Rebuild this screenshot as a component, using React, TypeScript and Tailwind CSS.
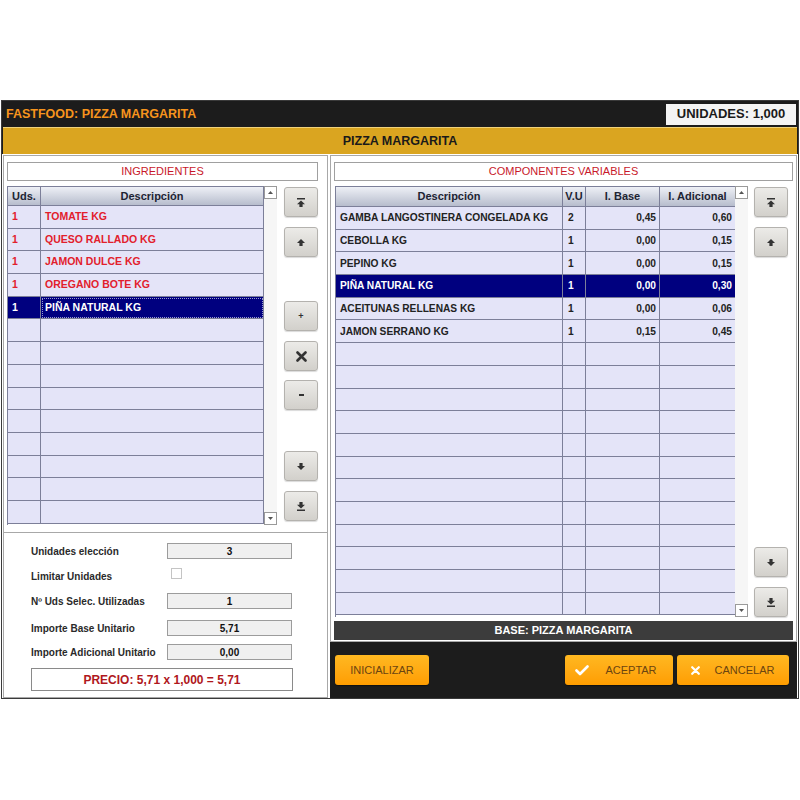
import React from 'react';

type IconName = 'top' | 'up' | 'plus' | 'x' | 'minus' | 'down' | 'bottom';

interface Ingredient {
  uds: string;
  desc: string;
}

interface Componente {
  desc: string;
  vu: string;
  base: string;
  adicional: string;
}

const ingredientes: Ingredient[] = [
  { uds: '1', desc: 'TOMATE KG' },
  { uds: '1', desc: 'QUESO RALLADO KG' },
  { uds: '1', desc: 'JAMON DULCE KG' },
  { uds: '1', desc: 'OREGANO BOTE KG' },
  { uds: '1', desc: 'PIÑA NATURAL KG' },
];

const componentes: Componente[] = [
  { desc: 'GAMBA LANGOSTINERA CONGELADA KG', vu: '2', base: '0,45', adicional: '0,60' },
  { desc: 'CEBOLLA KG', vu: '1', base: '0,00', adicional: '0,15' },
  { desc: 'PEPINO KG', vu: '1', base: '0,00', adicional: '0,15' },
  { desc: 'PIÑA NATURAL KG', vu: '1', base: '0,00', adicional: '0,30' },
  { desc: 'ACEITUNAS RELLENAS KG', vu: '1', base: '0,00', adicional: '0,06' },
  { desc: 'JAMON SERRANO KG', vu: '1', base: '0,15', adicional: '0,45' },
];

const NavIcon = ({ name }: { name: IconName }) => {
  if (name === 'plus') return <span className="text-[9px] font-bold leading-none text-[#333]">+</span>;
  if (name === 'minus') return <span className="block h-[2px] w-[5px] bg-[#333]" />;
  if (name === 'x')
    return (
      <svg width="11" height="11" viewBox="0 0 11 11">
        <path d="M1.5 1.5 L9.5 9.5 M9.5 1.5 L1.5 9.5" stroke="#333" strokeWidth="2.6" strokeLinecap="round" />
      </svg>
    );
  const paths: Record<string, string> = {
    top: 'M0 0 H8 V1.6 H0 Z M4 2.4 L8 6.2 H5.6 V9 H2.4 V6.2 H0 Z',
    up: 'M4 1 L8 5 H5.6 V8 H2.4 V5 H0 Z',
    down: 'M4 8 L8 4 H5.6 V1 H2.4 V4 H0 Z',
    bottom: 'M0 7.4 H8 V9 H0 Z M4 6.6 L8 2.8 H5.6 V0 H2.4 V2.8 H0 Z',
  };
  return (
    <svg width="8" height="9" viewBox="0 0 8 9">
      <path d={paths[name]} fill="#333" />
    </svg>
  );
};

const NavButton = ({ icon, className = '' }: { icon: IconName; className?: string }) => (
  <button
    className={`flex h-[30px] w-[34px] items-center justify-center rounded-[3px] border border-[#b4b2ae] bg-gradient-to-b from-[#ecebe8] to-[#d2d0cb] shadow-[0_1px_1px_rgba(0,0,0,0.15)] ${className}`}
  >
    <NavIcon name={icon} />
  </button>
);

const ScrollBar = () => (
  <div className="flex w-[13px] flex-col justify-between bg-[#f6f6f6]">
    <div className="flex h-[13px] w-[13px] items-center justify-center border border-[#9a9a9a] bg-white">
      <svg width="5" height="3" viewBox="0 0 5 3">
        <path d="M2.5 0 L5 3 H0 Z" fill="#555" />
      </svg>
    </div>
    <div className="flex h-[13px] w-[13px] items-center justify-center border border-[#9a9a9a] bg-white">
      <svg width="5" height="3" viewBox="0 0 5 3">
        <path d="M0 0 H5 L2.5 3 Z" fill="#555" />
      </svg>
    </div>
  </div>
);

const headCell =
  'flex items-center justify-center border-r border-b border-[#7c7f99] bg-gradient-to-b from-[#eef0f6] to-[#b7bdcd] text-[11px] font-bold text-[#1d2433]';

const LeftTable = () => {
  const rows = Array.from({ length: 14 }, (_, i) => ingredientes[i]);
  return (
    <div className="mt-[5px] flex h-[339px] w-[270px] overflow-hidden">
      <div className="w-[257px] border-l border-t border-[#7c7f99]">
        <div className="grid h-[19px] grid-cols-[33px_223px]">
          <div className={headCell}>Uds.</div>
          <div className={headCell}>Descripción</div>
        </div>
        {rows.map((r, i) => {
          const sel = i === 4;
          return (
            <div
              key={i}
              className={`grid h-[22.7px] grid-cols-[33px_223px] text-[10.5px] font-bold ${
                sel ? 'bg-[#00007f] text-white' : 'bg-[#e4e4f8] text-[#e2202c]'
              }`}
            >
              <div className="flex items-center border-r border-b border-[#7c7f99] pl-[4px]">{r?.uds}</div>
              <div
                className={`flex items-center border-r border-b border-[#7c7f99] pl-[4px] ${
                  sel ? 'outline outline-1 -outline-offset-2 outline-dotted outline-[#9a9ad0]' : ''
                }`}
              >
                {r?.desc}
              </div>
            </div>
          );
        })}
      </div>
      <ScrollBar />
    </div>
  );
};

const RightTable = () => {
  const rows = Array.from({ length: 18 }, (_, i) => componentes[i]);
  const cols = 'grid-cols-[227px_23px_74px_76px]';
  return (
    <div className="mt-[5px] flex h-[431px] w-[413px] overflow-hidden">
      <div className="w-[400px] border-l border-t border-[#7c7f99]">
        <div className={`grid h-[20px] ${cols}`}>
          <div className={headCell}>Descripción</div>
          <div className={headCell}>V.U</div>
          <div className={headCell}>I. Base</div>
          <div className={headCell}>I. Adicional</div>
        </div>
        {rows.map((r, i) => {
          const sel = i === 3;
          return (
            <div
              key={i}
              className={`grid h-[22.7px] ${cols} text-[10.2px] font-bold ${
                sel ? 'bg-[#00007f] text-white' : 'bg-[#e4e4f8] text-[#222]'
              }`}
            >
              <div className="flex items-center whitespace-nowrap border-r border-b border-[#7c7f99] pl-[4px]">{r?.desc}</div>
              <div className="flex items-center border-r border-b border-[#7c7f99] pl-[5px]">{r?.vu}</div>
              <div className="flex items-center justify-end border-r border-b border-[#7c7f99] pr-[3px]">{r?.base}</div>
              <div className="flex items-center justify-end border-r border-b border-[#7c7f99] pr-[3px]">{r?.adicional}</div>
            </div>
          );
        })}
      </div>
      <ScrollBar />
    </div>
  );
};

const InfoField = ({ value }: { value: string }) => (
  <div className="flex h-[16px] w-[125px] items-center justify-center border border-[#9c9c9c] bg-[#f0f0f0] text-[10px] font-bold text-[#111]">
    {value}
  </div>
);

const InfoRow = ({ label, className, children }: { label: string; className: string; children: React.ReactNode }) => (
  <div className={`flex h-[16px] items-center ${className}`}>
    <span className="w-[136px] text-[10px] font-bold text-[#2a2a2a]">{label}</span>
    {children}
  </div>
);

const ActionButton = ({ label, icon, className }: { label: string; icon?: React.ReactNode; className: string }) => (
  <button
    className={`flex h-[30px] items-center rounded-[3px] bg-gradient-to-b from-[#ffb820] to-[#ff9d00] text-[11px] text-[#6b4410] shadow-[0_1px_1px_rgba(0,0,0,0.4)] ${className}`}
  >
    {icon}
    <span className="flex-1 text-center">{label}</span>
  </button>
);

export default function App() {
  return (
    <div className="h-[800px] w-[800px] bg-white pt-[100px] font-['Liberation_Sans',Arial,sans-serif]">
      <div className="ml-[1px] flex h-[599px] w-[798px] flex-col border border-[#3a3a3a] bg-[#1c1c1c]">
        {/* Title bar */}
        <div className="flex h-[26px] items-center justify-between pl-[4px] pr-[2px]">
          <span className="text-[12.5px] font-bold text-[#f7941d]">FASTFOOD: PIZZA MARGARITA</span>
          <div className="flex h-[21px] w-[130px] items-center justify-center bg-[#f4f4f4] text-[13px] font-bold text-[#1a1a1a]">
            UNIDADES: 1,000
          </div>
        </div>

        {/* Gold bar */}
        <div className="mx-[1px] flex h-[27px] items-center justify-center border-t border-[#f0d27a] bg-[#daa520] text-[12.5px] font-bold text-[#1a1a1a]">
          PIZZA MARGARITA
        </div>

        {/* Body */}
        <div className="flex flex-1 gap-[2px] bg-white px-[1px] pt-[1px]">
          {/* Left column */}
          <div className="flex w-[325px] flex-col">
            <div className="h-[378px] border border-[#a8a8a8] bg-white pl-[3px]">
              <div className="mt-[6px] flex h-[19px] w-[311px] items-center justify-center border border-[#a0a0a0] text-[11px] text-[#c8182a]">
                INGREDIENTES
              </div>
              <div className="flex">
                <LeftTable />
                <div className="ml-[7px] mt-[6px] flex flex-col">
                  <NavButton icon="top" />
                  <NavButton icon="up" className="mt-[10px]" />
                  <NavButton icon="plus" className="mt-[44px]" />
                  <NavButton icon="x" className="mt-[10px]" />
                  <NavButton icon="minus" className="mt-[9px]" />
                  <NavButton icon="down" className="mt-[41px]" />
                  <NavButton icon="bottom" className="mt-[10px]" />
                </div>
              </div>
            </div>
            <div className="flex-1 border border-t-0 border-[#a8a8a8] bg-white pl-[27px]">
              <InfoRow label="Unidades elección" className="mt-[10px]">
                <InfoField value="3" />
              </InfoRow>
              <InfoRow label="Limitar Unidades" className="mt-[10px] items-start">
                <span className="mt-[-1px] ml-[4px] block h-[11px] w-[11px] border border-[#c4c4c4] bg-white" />
              </InfoRow>
              <InfoRow label="Nº Uds Selec. Utilizadas" className="mt-[8px]">
                <InfoField value="1" />
              </InfoRow>
              <InfoRow label="Importe Base Unitario" className="mt-[11px]">
                <InfoField value="5,71" />
              </InfoRow>
              <InfoRow label="Importe Adicional Unitario" className="mt-[8px]">
                <InfoField value="0,00" />
              </InfoRow>
              <div className="mt-[8px] flex h-[23px] w-[262px] items-center justify-center border border-[#8a8a8a] text-[12px] font-bold text-[#b0181c]">
                PRECIO: 5,71 x 1,000 = 5,71
              </div>
            </div>
          </div>

          {/* Right column */}
          <div className="flex flex-1 flex-col">
            <div className="h-[487px] border border-[#a8a8a8] bg-white pl-[3px]">
              <div className="mt-[6px] flex h-[19px] w-[459px] items-center justify-center border border-[#a0a0a0] text-[11px] text-[#c8182a]">
                COMPONENTES VARIABLES
              </div>
              <div className="flex pl-[1px]">
                <RightTable />
                <div className="ml-[6px] mt-[6px] flex flex-col">
                  <NavButton icon="top" />
                  <NavButton icon="up" className="mt-[10px]" />
                  <NavButton icon="down" className="mt-[290px]" />
                  <NavButton icon="bottom" className="mt-[10px]" />
                </div>
              </div>
              <div className="mt-[4px] flex h-[19px] w-[459px] items-center justify-center bg-[#3c3c3c] text-[11px] font-bold text-white">
                BASE: PIZZA MARGARITA
              </div>
            </div>
            <div className="flex flex-1 items-start bg-[#1c1c1c] pl-[5px] pt-[13px]">
              <ActionButton label="INICIALIZAR" className="w-[94px]" />
              <ActionButton
                label="ACEPTAR"
                className="ml-[136px] w-[108px] pl-[10px]"
                icon={
                  <svg width="14" height="11" viewBox="0 0 14 11">
                    <path d="M1.5 5.5 L5 9 L12.5 1.5" stroke="#fff" strokeWidth="2.6" fill="none" strokeLinecap="round" strokeLinejoin="round" />
                  </svg>
                }
              />
              <ActionButton
                label="CANCELAR"
                className="ml-[4px] w-[112px] pl-[14px]"
                icon={
                  <svg width="9" height="9" viewBox="0 0 9 9">
                    <path d="M1.2 1.2 L7.8 7.8 M7.8 1.2 L1.2 7.8" stroke="#fff" strokeWidth="2.2" strokeLinecap="round" />
                  </svg>
                }
              />
            </div>
          </div>
        </div>
      </div>
    </div>
  );
}
